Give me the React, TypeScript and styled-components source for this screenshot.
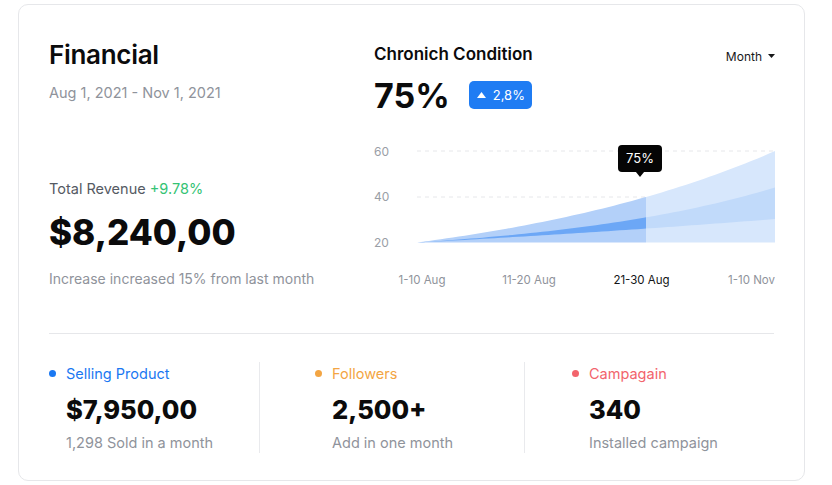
import React from "react";
import styled, { createGlobalStyle } from "styled-components";

const GlobalStyle = createGlobalStyle`
  html, body { margin: 0; padding: 0; background: #ffffff; }
  body { font-family: Inter, "Noto Sans", "Liberation Sans", sans-serif; color: #0b0b0c; }
  * { box-sizing: border-box; }
`;

const Page = styled.div`
  padding: 4px 27px 4px 18px;
`;

const Card = styled.div`
  width: 787px;
  height: 477px;
  border: 1px solid #e6e7ea;
  border-radius: 10px;
  padding: 34px 30px 0 30px;
  background: #fff;
`;

const Top = styled.div`
  display: grid;
  grid-template-columns: 325px 1fr;
  height: 251px;
`;

const LeftCol = styled.div`
  display: flex;
  flex-direction: column;
`;

const Title = styled.h1`
  margin: 0;
  font-size: 26px;
  line-height: 32px;
  font-weight: 600;
  letter-spacing: -0.3px;
`;

const Muted = styled.div<{ $mt?: number; $size?: number }>`
  margin-top: ${(p) => p.$mt ?? 0}px;
  font-size: ${(p) => p.$size ?? 14.5}px;
  line-height: 20px;
  color: #8f939b;
`;

const RevenueLabel = styled.div`
  margin-top: 76px;
  font-size: 14.5px;
  line-height: 20px;
  color: #555a63;
`;

const Green = styled.span`
  color: #35c374;
`;

const BigValue = styled.div<{ $size: number; $mt: number }>`
  margin-top: ${(p) => p.$mt}px;
  font-size: ${(p) => p.$size}px;
  line-height: ${(p) => p.$size + 8}px;
  font-weight: 800;
`;

const RightCol = styled.div`
  display: flex;
  flex-direction: column;
`;

const HeaderRow = styled.div`
  margin-top: 3px;
  display: flex;
  justify-content: space-between;
  align-items: center;
  height: 24px;
`;

const SubTitle = styled.div`
  font-size: 17px;
  line-height: 24px;
  font-weight: 600;
`;

const Dropdown = styled.div`
  display: flex;
  align-items: center;
  gap: 6px;
  font-size: 12px;
  color: #17181a;
  margin-top: 4px;
`;

const PercentRow = styled.div`
  margin-top: 10px;
  display: flex;
  align-items: center;
  gap: 19px;
  height: 40px;
`;

const Percent = styled.div`
  font-size: 34px;
  line-height: 40px;
  font-weight: 700;
`;

const Badge = styled.div`
  display: flex;
  align-items: center;
  gap: 7px;
  height: 28px;
  padding: 0 7px 0 8px;
  margin-top: -2px;
  border-radius: 5px;
  background: #1f7cf3;
  color: #fff;
  font-size: 13px;
`;

const ChartWrap = styled.div`
  margin-top: 24px;
`;

const Divider = styled.div`
  height: 1px;
  background: #e6e7ea;
  margin-top: 43px;
`;

const Stats = styled.div`
  display: grid;
  grid-template-columns: 210px 265px 1fr;
  margin-top: 28px;
`;

const Stat = styled.div<{ $pl: number; $divider?: boolean }>`
  padding-left: ${(p) => p.$pl}px;
  padding-top: 2px;
  border-left: ${(p) => (p.$divider ? "1px solid #e9eaed" : "none")};
  height: 91px;
`;

const StatLabel = styled.div<{ $color: string }>`
  display: flex;
  align-items: center;
  gap: 10px;
  font-size: 14.5px;
  line-height: 20px;
  color: ${(p) => p.$color};
`;

const Dot = styled.span<{ $color: string }>`
  width: 7px;
  height: 7px;
  border-radius: 50%;
  background: ${(p) => p.$color};
  margin-top: -2px;
`;

const StatBody = styled.div`
  padding-left: 17px;
`;

const StatValue = styled.div`
  margin-top: 10px;
  font-size: 25.5px;
  line-height: 32px;
  font-weight: 800;
`;

const StatSub = styled.div`
  margin-top: 7px;
  font-size: 14.5px;
  line-height: 20px;
  color: #8f939b;
`;

const X0 = 43;
const X1 = 401;
const Y0 = 102.5;
const SPLIT = 272;

function curve(H: number, a: number): [number, number][] {
  const pts: [number, number][] = [];
  for (let i = 0; i <= 60; i++) {
    const t = i / 60;
    pts.push([X0 + t * (X1 - X0), Y0 - (H * (Math.exp(a * t) - 1)) / (Math.exp(a) - 1)]);
  }
  return pts;
}

const toPath = (pts: [number, number][]) => pts.map((p, i) => `${i ? "L" : "M"}${p[0].toFixed(2)},${p[1].toFixed(2)}`).join(" ");

const A = curve(91.5, 1.2);
const B = curve(55, 1.55);
const C = curve(23.5, 0.4);
const areaA = `${toPath(A)} L${X1},${Y0} L${X0},${Y0} Z`;
const band = `${toPath(B)} ${C.slice()
  .reverse()
  .map((p) => `L${p[0].toFixed(2)},${p[1].toFixed(2)}`)
  .join(" ")} Z`;

const Chart = () => (
  <svg width={401} height={150} viewBox="0 0 401 150" style={{ display: "block" }}>
    <defs>
      <clipPath id="leftClip">
        <rect x={0} y={0} width={SPLIT} height={150} />
      </clipPath>
      <clipPath id="rightClip">
        <rect x={SPLIT} y={0} width={401 - SPLIT} height={150} />
      </clipPath>
    </defs>
    <line x1={43} x2={401} y1={11} y2={11} stroke="#e6e7ea" strokeDasharray="4 4" />
    <line x1={43} x2={401} y1={57} y2={57} stroke="#e6e7ea" strokeDasharray="4 4" />
    <g fontFamily="Inter, 'Liberation Sans', sans-serif" fontSize={12} fill="#9a9ea6">
      <text x={0} y={15.5}>60</text>
      <text x={0} y={61}>40</text>
      <text x={0} y={106.5}>20</text>
    </g>
    <g clipPath="url(#leftClip)">
      <path d={areaA} fill="#b3d0f9" />
      <path d={band} fill="#6ca7f6" />
    </g>
    <g clipPath="url(#rightClip)">
      <path d={areaA} fill="#d7e7fc" />
      <path d={band} fill="#c1dafa" />
    </g>
    <g fontFamily="Inter, 'Liberation Sans', sans-serif" fontSize={11.5} fill="#8f939b" textAnchor="middle">
      <text x={48} y={144}>1-10 Aug</text>
      <text x={155} y={144}>11-20 Aug</text>
      <text x={267.5} y={144} fill="#131416">21-30 Aug</text>
      <text x={401} y={144} textAnchor="end">1-10 Nov</text>
    </g>
    <rect x={244} y={5} width={44} height={27} rx={4} fill="#050505" />
    <path d="M261.5,31.5 L266,37 L270.5,31.5 Z" fill="#050505" />
    <text x={266} y={23} textAnchor="middle" fontFamily="Inter, 'Liberation Sans', sans-serif" fontSize={13} fill="#ffffff">
      75%
    </text>
  </svg>
);

const stats = [
  { label: "Selling Product", color: "#1a78f2", value: "$7,950,00", sub: "1,298 Sold in a month", pl: 0, divider: false },
  { label: "Followers", color: "#f3a543", value: "2,500+", sub: "Add in one month", pl: 55, divider: true },
  { label: "Campagain", color: "#f2646c", value: "340", sub: "Installed campaign", pl: 47, divider: true },
];

export default function App() {
  return (
    <>
      <GlobalStyle />
      <Page>
        <Card>
          <Top>
            <LeftCol>
              <Title>Financial</Title>
              <Muted $mt={12}>Aug 1, 2021 - Nov 1, 2021</Muted>
              <RevenueLabel>
                Total Revenue <Green>+9.78%</Green>
              </RevenueLabel>
              <BigValue $size={35} $mt={12}>$8,240,00</BigValue>
              <Muted $mt={15} $size={14}>Increase increased 15% from last month</Muted>
            </LeftCol>
            <RightCol>
              <HeaderRow>
                <SubTitle>Chronich Condition</SubTitle>
                <Dropdown>
                  Month
                  <svg width={7} height={4} viewBox="0 0 7 4">
                    <path d="M0,0 L7,0 L3.5,4 Z" fill="#17181a" />
                  </svg>
                </Dropdown>
              </HeaderRow>
              <PercentRow>
                <Percent>75%</Percent>
                <Badge>
                  <svg width={9} height={6} viewBox="0 0 9 6">
                    <path d="M0,6 L9,6 L4.5,0 Z" fill="#ffffff" />
                  </svg>
                  2,8%
                </Badge>
              </PercentRow>
              <ChartWrap>
                <Chart />
              </ChartWrap>
            </RightCol>
          </Top>
          <Divider />
          <Stats>
            {stats.map((s) => (
              <Stat key={s.label} $pl={s.pl} $divider={s.divider}>
                <StatLabel $color={s.color}>
                  <Dot $color={s.color} />
                  {s.label}
                </StatLabel>
                <StatBody>
                  <StatValue>{s.value}</StatValue>
                  <StatSub>{s.sub}</StatSub>
                </StatBody>
              </Stat>
            ))}
          </Stats>
        </Card>
      </Page>
    </>
  );
}
